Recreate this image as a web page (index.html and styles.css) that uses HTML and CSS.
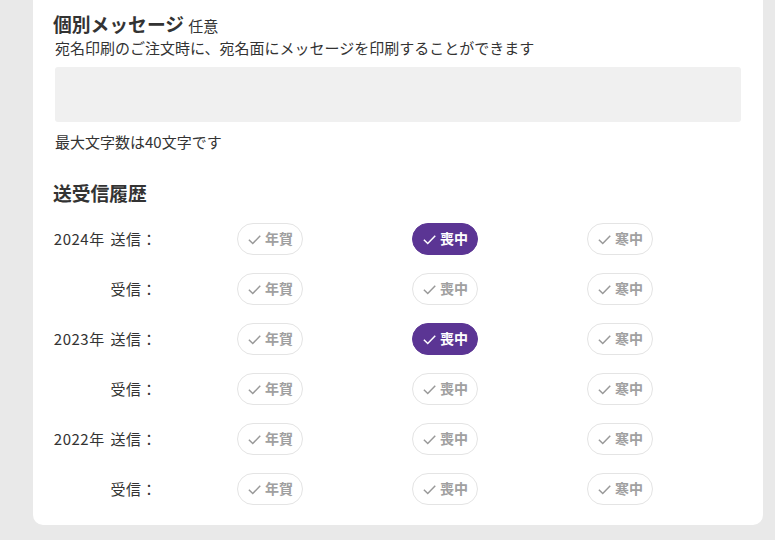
FILE: index.html
```html
<!DOCTYPE html>
<html lang="ja">
<head>
<meta charset="utf-8">
<link rel="stylesheet" href="styles.css">
</head>
<body>
<div class="card">
  <h2 class="title">個別メッセージ <span class="optional">任意</span></h2>
  <p class="desc">宛名印刷のご注文時に、宛名面にメッセージを印刷することができます</p>
  <div class="textarea"></div>
  <p class="note">最大文字数は40文字です</p>

  <h2 class="heading">送受信履歴</h2>
  <div class="history">
    <div class="label">2024年 送信：</div>
    <span class="chip"><svg viewBox="0 0 12 12"><path d="M1.5 6.2 L4.6 9.2 L10.6 3"/></svg>年賀</span>
    <span class="chip on"><svg viewBox="0 0 12 12"><path d="M1.5 6.2 L4.6 9.2 L10.6 3"/></svg>喪中</span>
    <span class="chip"><svg viewBox="0 0 12 12"><path d="M1.5 6.2 L4.6 9.2 L10.6 3"/></svg>寒中</span>

    <div class="label">受信：</div>
    <span class="chip"><svg viewBox="0 0 12 12"><path d="M1.5 6.2 L4.6 9.2 L10.6 3"/></svg>年賀</span>
    <span class="chip"><svg viewBox="0 0 12 12"><path d="M1.5 6.2 L4.6 9.2 L10.6 3"/></svg>喪中</span>
    <span class="chip"><svg viewBox="0 0 12 12"><path d="M1.5 6.2 L4.6 9.2 L10.6 3"/></svg>寒中</span>

    <div class="label">2023年 送信：</div>
    <span class="chip"><svg viewBox="0 0 12 12"><path d="M1.5 6.2 L4.6 9.2 L10.6 3"/></svg>年賀</span>
    <span class="chip on"><svg viewBox="0 0 12 12"><path d="M1.5 6.2 L4.6 9.2 L10.6 3"/></svg>喪中</span>
    <span class="chip"><svg viewBox="0 0 12 12"><path d="M1.5 6.2 L4.6 9.2 L10.6 3"/></svg>寒中</span>

    <div class="label">受信：</div>
    <span class="chip"><svg viewBox="0 0 12 12"><path d="M1.5 6.2 L4.6 9.2 L10.6 3"/></svg>年賀</span>
    <span class="chip"><svg viewBox="0 0 12 12"><path d="M1.5 6.2 L4.6 9.2 L10.6 3"/></svg>喪中</span>
    <span class="chip"><svg viewBox="0 0 12 12"><path d="M1.5 6.2 L4.6 9.2 L10.6 3"/></svg>寒中</span>

    <div class="label">2022年 送信：</div>
    <span class="chip"><svg viewBox="0 0 12 12"><path d="M1.5 6.2 L4.6 9.2 L10.6 3"/></svg>年賀</span>
    <span class="chip"><svg viewBox="0 0 12 12"><path d="M1.5 6.2 L4.6 9.2 L10.6 3"/></svg>喪中</span>
    <span class="chip"><svg viewBox="0 0 12 12"><path d="M1.5 6.2 L4.6 9.2 L10.6 3"/></svg>寒中</span>

    <div class="label">受信：</div>
    <span class="chip"><svg viewBox="0 0 12 12"><path d="M1.5 6.2 L4.6 9.2 L10.6 3"/></svg>年賀</span>
    <span class="chip"><svg viewBox="0 0 12 12"><path d="M1.5 6.2 L4.6 9.2 L10.6 3"/></svg>喪中</span>
    <span class="chip"><svg viewBox="0 0 12 12"><path d="M1.5 6.2 L4.6 9.2 L10.6 3"/></svg>寒中</span>
  </div>
</div>
</body>
</html>
```

FILE: styles.css
```css
html, body {
  margin: 0;
  padding: 0;
  background: #e9e9e9;
}
body {
  font-family: "Noto Sans CJK JP", "Noto Sans", sans-serif;
  color: #333;
}
.card {
  margin-left: 33px;
  width: 730px;
  box-sizing: border-box;
  background: #fff;
  border-radius: 0 0 10px 10px;
  padding: 12px 22px 20px 20px;
}
.title {
  margin: 0;
  font-size: 18.8px;
  line-height: 24px;
  font-weight: 700;
  color: #333;
}
.optional {
  font-size: 15px;
  font-weight: 400;
}
.desc {
  margin: 0 0 0 2px;
  font-size: 15px;
  line-height: 20px;
}
.textarea {
  margin: 9px 0 0 2px;
  height: 55px;
  background: #f0f0f0;
  border-radius: 3px;
}
.note {
  margin: 10px 0 0 2px;
  font-size: 15px;
  line-height: 20px;
}
.heading {
  margin: 29px 0 0;
  font-size: 18.8px;
  line-height: 24px;
  font-weight: 700;
}
.history {
  margin-top: 18px;
  display: grid;
  grid-template-columns: 184px 175px 175px 175px;
  row-gap: 18px;
  align-items: center;
}
.label {
  width: 104px;
  text-align: right;
  font-size: 15px;
  line-height: 32px;
  word-spacing: 2px;
  letter-spacing: 0.5px;
}
.chip {
  display: inline-flex;
  align-items: center;
  justify-content: center;
  gap: 3px;
  width: 66px;
  height: 32px;
  box-sizing: border-box;
  border: 1px solid #e4e4e4;
  border-radius: 16px;
  color: #a0a0a0;
  font-size: 14px;
  font-weight: 700;
  line-height: 1;
  padding-bottom: 2px;
}
.chip svg {
  width: 15px;
  height: 15px;
  fill: none;
  stroke: #999;
  stroke-width: 1.2;
  margin-top: 2px;
}
.chip.on {
  background: #5b3594;
  border-color: #5b3594;
  color: #fff;
}
.chip.on svg {
  stroke: #fff;
}
```
